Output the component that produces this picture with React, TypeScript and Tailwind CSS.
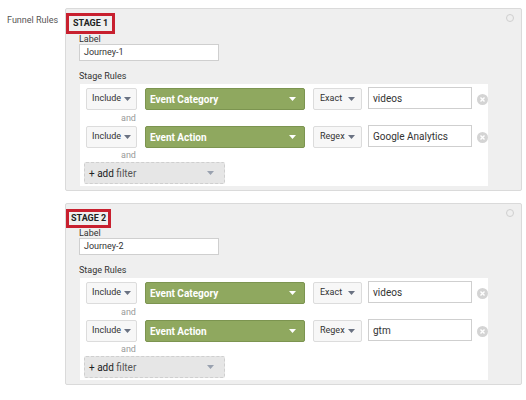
import React from 'react';

const font = { fontFamily: 'Roboto, "Liberation Sans", sans-serif' };

const Caret = ({ color = 'text-gray-500' }: { color?: string }) => (
  <svg width="7" height="4" viewBox="0 0 7 4" className={color}>
    <path d="M0 0h7L3.5 4z" fill="currentColor" />
  </svg>
);

const Remove = () => (
  <svg width="11" height="11" viewBox="0 0 11 11">
    <circle cx="5.5" cy="5.5" r="5.5" fill="#d4d4d4" />
    <path d="M3.5 3.5l4 4M7.5 3.5l-4 4" stroke="#fff" strokeWidth="1.4" />
  </svg>
);

const Rule = ({ dim, match, value }: { dim: string; match: string; value: string }) => (
  <div className="flex items-center h-[22px]">
    <div className="ml-[6px] w-[51px] h-[22px] flex items-center justify-between px-[5px] bg-[#f7f7f7] border border-[#dcdcdc] rounded-[2px] text-[9px] text-[#333]">
      Include <Caret />
    </div>
    <div className="ml-[8px] w-[160px] h-[22px] flex items-center justify-between px-[4px] pr-[8px] bg-[#8fa85f] border border-[#7c9450] rounded-[2px] text-[10px] font-bold text-white">
      {dim} <Caret color="text-white" />
    </div>
    <div className="ml-[8px] w-[49px] h-[22px] flex items-center justify-between px-[6px] bg-[#f7f7f7] border border-[#dcdcdc] rounded-[2px] text-[9px] text-[#333]">
      {match} <Caret />
    </div>
    <div className="ml-[6px] w-[104px] h-[22px] -mt-[2px] flex items-center px-[4px] bg-white border border-[#cfcfcf] text-[10px] text-[#333]">
      {value}
    </div>
    <div className="ml-[5px]"><Remove /></div>
  </div>
);

const Stage = ({ n, label, val2, wide }: { n: number; label: string; val2: string; wide: boolean }) => (
  <div className="ml-[65px] w-[457px] bg-[#efefef] border border-[#dadada] rounded-[2px] relative">
    <div className="absolute right-[7px] top-[5px] w-[8px] h-[8px] rounded-full border border-[#cfcfcf]" />
    <div className={`inline-block border-[3px] border-[#c8202f] text-[9px] font-bold text-[#222] leading-[11px] ${wide ? 'px-[4px] py-[2px] mt-[3px]' : 'px-[2px] py-[1px] mt-[1px]'}`}>
      STAGE {n}
    </div>
    <div className="ml-[13px] text-[9px] leading-[10px] text-[#333]">Label</div>
    <div className="ml-[13px] w-[140px] h-[17px] bg-white border border-[#cfcfcf] text-[9px] text-[#333] px-[4px] flex items-center">
      {label}
    </div>
    <div className="ml-[13px] mt-[9px] text-[9px] leading-[12px] text-[#333]">Stage Rules</div>
    <div className="ml-[14px] mt-[2px] w-[408px] bg-white pt-[4px] pb-[2px] mb-[4px]">
      <Rule dim="Event Category" match="Exact" value="videos" />
      <div className="ml-[41px] h-[16px] text-[9px] text-[#999] leading-[16px]">and</div>
      <Rule dim="Event Action" match="Regex" value={val2} />
      <div className="ml-[41px] h-[14px] text-[9px] text-[#999] leading-[14px]">and</div>
      <div className="ml-[4px] w-[141px] h-[22px] flex items-center justify-between px-[4px] pr-[10px] bg-[#e6e6e6] border border-dashed border-[#cfcfcf] rounded-[2px] text-[10px]">
        <span className="text-[#222]">+ add <span className="text-[#555]">filter</span></span>
        <Caret color="text-gray-400" />
      </div>
    </div>
  </div>
);

export default function App() {
  return (
    <div className="w-[526px] h-[400px] bg-white relative pt-[8px]" style={font}>
      <div className="absolute left-[7px] top-[14px] text-[9px] text-[#555]">Funnel Rules</div>
      <Stage n={1} label="Journey-1" val2="Google Analytics" wide />
      <div className="h-[12px]" />
      <Stage n={2} label="Journey-2" val2="gtm" wide={false} />
    </div>
  );
}
